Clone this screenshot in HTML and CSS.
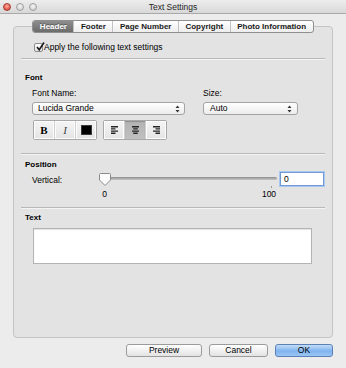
FILE: index.html
```html
<!DOCTYPE html>
<html lang="en">
<head>
  <meta charset="UTF-8" />
  <title>Text Settings</title>
  <link rel="stylesheet" href="styles.css">
</head>
<body>
  <div class="window">

    <!-- Title bar -->
    <div class="titlebar">
      <div class="lights">
        <span class="light red"></span>
        <span class="light"></span>
        <span class="light"></span>
      </div>
      <div class="title">Text Settings</div>
      <div></div>
    </div>

    <!-- Settings panel -->
    <div class="panel">
      <div class="tabs">
        <span class="tab active">Header</span>
        <span class="tab">Footer</span>
        <span class="tab">Page Number</span>
        <span class="tab">Copyright</span>
        <span class="tab">Photo Information</span>
      </div>

      <label class="check-row">
        <span class="checkbox">
          <svg width="10" height="10" viewBox="0 0 10 10"><path d="M2 5 L4.2 7.8 L9 0.5" fill="none" stroke="#1c1c1c" stroke-width="1.6"/></svg>
        </span>
        Apply the following text settings
      </label>

      <div class="separator"></div>

      <div class="section-title">Font</div>
      <div class="font-row">
        <div class="font-col">
          <div class="field-label">Font Name:</div>
          <div class="popup font-popup">
            <span>Lucida Grande</span>
            <svg width="5" height="8" viewBox="0 0 5 8"><path d="M0.5 3 L2.5 0.5 L4.5 3 Z M0.5 5 L2.5 7.5 L4.5 5 Z" fill="#333"/></svg>
          </div>
          <div class="tool-row">
            <div class="seg">
              <span class="tool bold">B</span>
              <span class="tool italic">I</span>
              <span class="tool"><span class="swatch"></span></span>
            </div>
            <div class="seg">
              <span class="tool">
                <svg width="7" height="8" viewBox="0 0 7 8"><path d="M0 0h7v1.4H0z M0 2.2h4.5v1.4H0z M0 4.4h7v1.4H0z M0 6.6h4.5v1.4H0z" fill="#262626"/></svg>
              </span>
              <span class="tool pressed">
                <svg width="7" height="8" viewBox="0 0 7 8"><path d="M0 0h7v1.4H0z M1.25 2.2h4.5v1.4h-4.5z M0 4.4h7v1.4H0z M1.25 6.6h4.5v1.4h-4.5z" fill="#262626"/></svg>
              </span>
              <span class="tool">
                <svg width="7" height="8" viewBox="0 0 7 8"><path d="M0 0h7v1.4H0z M2.5 2.2h4.5v1.4H2.5z M0 4.4h7v1.4H0z M2.5 6.6h4.5v1.4H2.5z" fill="#262626"/></svg>
              </span>
            </div>
          </div>
        </div>
        <div class="size-col">
          <div class="field-label">Size:</div>
          <div class="popup size-popup">
            <span>Auto</span>
            <svg width="5" height="8" viewBox="0 0 5 8"><path d="M0.5 3 L2.5 0.5 L4.5 3 Z M0.5 5 L2.5 7.5 L4.5 5 Z" fill="#333"/></svg>
          </div>
        </div>
      </div>

      <div class="separator sep-font"></div>

      <div class="section-title title-position">Position</div>
      <div class="slider-row">
        <span class="field-label slider-label">Vertical:</span>
        <div class="slider">
          <div class="track"></div>
          <svg class="thumb" width="12" height="13" viewBox="0 0 12 13"><path d="M1.5 0.5 H10.5 Q11.5 0.5 11.5 1.5 V7 L6 12.5 L0.5 7 V1.5 Q0.5 0.5 1.5 0.5 Z" fill="#fbfbfb" stroke="#8a8a8a"/></svg>
          <span class="tick"></span>
        </div>
        <div class="textfield">0</div>
      </div>
      <div class="slider-scale">
        <span class="scale-min">0</span>
        <span class="scale-max">100</span>
      </div>

      <div class="separator sep-position"></div>

      <div class="section-title title-text">Text</div>
      <div class="textarea"></div>
    </div>

    <!-- Dialog buttons -->
    <div class="actions">
      <button class="button preview">Preview</button>
      <button class="button cancel">Cancel</button>
      <button class="button default">OK</button>
    </div>
  </div>
</body>
</html>
```

FILE: styles.css
```css
* {
  box-sizing: border-box;
  margin: 0;
  padding: 0;
}

body {
  font-family: "Liberation Sans", Arial, sans-serif;
  font-size: 8.5px;
  color: #000;
  background: #ececec;
}

.window {
  width: 346px;
  height: 368px;
  display: flex;
  flex-direction: column;
  background: #ececec;
  overflow: hidden;
}

/* Title bar */
.titlebar {
  height: 14px;
  display: grid;
  grid-template-columns: 1fr auto 1fr;
  align-items: center;
  background: linear-gradient(#ededed, #d8d8d8);
  border-bottom: 1px solid #a9a9a9;
}

.lights {
  display: flex;
  gap: 5px;
  padding-left: 3px;
}

.light {
  width: 8px;
  height: 8px;
  border-radius: 50%;
  border: 1px solid #a0a0a0;
  background: radial-gradient(circle at 50% 35%, #f6f6f6, #c6c6c6);
}

.light.red {
  border-color: #a63a30;
  background: radial-gradient(circle at 50% 35%, #ffab9c, #d6342b);
}

.title {
  color: #262626;
  line-height: 10px;
}

/* Panel */
.panel {
  margin: 12px 13px 0;
  height: 312px;
  padding: 0 7px;
  border: 1px solid #c4c4c4;
  border-radius: 4px;
  background: #e3e3e3;
  display: flex;
  flex-direction: column;
}

.tabs {
  align-self: center;
  margin-top: -7px;
  height: 13px;
  display: flex;
  border: 1px solid #8f8f8f;
  border-radius: 3px;
  overflow: hidden;
  background: linear-gradient(#ffffff, #ededed);
}

.tab {
  padding: 0 6.5px;
  font-size: 8px;
  font-weight: bold;
  line-height: 11px;
  color: #1a1a1a;
  border-left: 1px solid #c2c2c2;
}

.tab:first-child {
  border-left: 0;
}

.tab.active {
  color: #fff;
  background: linear-gradient(#8d8d8d, #6c6c6c);
  text-shadow: 0 -1px 0 rgba(0, 0, 0, 0.35);
}

.check-row {
  display: flex;
  align-items: center;
  gap: 1px;
  height: 10px;
  margin: 9px 0 0 13px;
}

.checkbox {
  position: relative;
  width: 9px;
  height: 9px;
  border: 1px solid #8c8c8c;
  border-radius: 2px;
  background: linear-gradient(#ffffff, #e4e4e4);
}

.checkbox svg {
  position: absolute;
  left: 0;
  top: -2px;
}

.separator {
  height: 2px;
  margin-top: 6px;
  border-top: 1px solid #b8b8b8;
  border-bottom: 1px solid #f4f4f4;
}

.section-title {
  height: 10px;
  margin: 13px 0 0 4px;
  font-size: 8px;
  font-weight: bold;
  line-height: 10px;
}

.field-label {
  height: 10px;
  line-height: 10px;
}

/* Font section */
.font-row {
  display: flex;
  gap: 18px;
  margin-top: 5px;
  padding-left: 11px;
}

.font-col {
  width: 153px;
}

.size-col {
  width: 95px;
}

.popup {
  height: 13px;
  margin-top: 4px;
  display: flex;
  align-items: center;
  justify-content: space-between;
  padding: 0 4px 0 5px;
  border: 1px solid #a3a3a3;
  border-radius: 3px;
  background: linear-gradient(#ffffff, #ececec);
  line-height: 11px;
}

.size-popup {
  padding-left: 6px;
  padding-right: 5px;
}

.tool-row {
  display: flex;
  gap: 6px;
  margin: 5px 0 0 1px;
}

.seg {
  display: flex;
  height: 20px;
  border: 1px solid #a8a8a8;
  border-radius: 2px;
  background: #d0d0d0;
  gap: 1px;
}

.tool {
  width: 20px;
  display: flex;
  align-items: center;
  justify-content: center;
  background: linear-gradient(#f5f5f5, #e4e4e4);
  box-shadow: inset 0 0 0 1px #fcfcfc;
  font-family: "Liberation Serif", "Times New Roman", serif;
  font-size: 11px;
}

.tool.bold {
  font-weight: bold;
}

.tool.italic {
  font-style: italic;
  color: #444;
}

.tool.pressed {
  background: linear-gradient(#b2b2b2, #c0c0c0);
  box-shadow: inset 0 1px 1px rgba(0, 0, 0, 0.2);
}

.swatch {
  width: 11px;
  height: 10px;
  background: #000;
  border: 1px solid #3a3a3a;
}

.sep-font {
  margin-top: 13px;
}

.title-position {
  margin-top: 5px;
}

/* Slider */
.slider-row {
  display: flex;
  gap: 3px;
  height: 14px;
  margin-top: 2px;
  padding-left: 11px;
}

.slider-label {
  width: 64px;
  padding-top: 3px;
}

.slider {
  position: relative;
  width: 178px;
}

.track {
  height: 3px;
  margin-top: 5px;
  border-radius: 2px;
  background: linear-gradient(#8e8e8e, #c6c6c6);
}

.thumb {
  position: absolute;
  left: 0;
  top: 1px;
}

.tick {
  position: absolute;
  left: 172px;
  top: 14px;
  width: 1px;
  height: 2px;
  background: #9a9a9a;
}

.textfield {
  width: 44px;
  padding-left: 3px;
  border: 1px solid #6f9ad6;
  box-shadow: 0 0 0 1px #a9c7ef;
  background: #fff;
  line-height: 12px;
}

.slider-scale {
  display: flex;
  justify-content: space-between;
  width: 178px;
  height: 10px;
  margin: 3px 0 0 78px;
  line-height: 10px;
}

.scale-min {
  width: 11px;
  text-align: center;
}

.scale-max {
  width: 16px;
  text-align: center;
}

.sep-position {
  margin-top: 8px;
}

.title-text {
  margin-top: 4px;
}

.textarea {
  width: 279px;
  height: 36px;
  margin: 5px 0 0 12px;
  border: 1px solid #b4b4b4;
  background: #fff;
  box-shadow: inset 0 1px 1px rgba(0, 0, 0, 0.12);
}

/* Dialog buttons */
.actions {
  display: flex;
  justify-content: flex-end;
  gap: 7px;
  margin-top: 6px;
  padding-right: 13px;
}

.button {
  height: 13px;
  border: 1px solid #9b9b9b;
  border-radius: 3px;
  background: linear-gradient(#ffffff, #e3e3e3);
  font-family: "Liberation Sans", Arial, sans-serif;
  font-size: 8.5px;
  line-height: 11px;
  color: #000;
}

.preview {
  width: 76px;
}

.cancel {
  width: 59px;
}

.default {
  width: 58px;
  border-color: #5b80b8;
  background: linear-gradient(#c4ddf8, #7fb3ee 55%, #9cc6f3);
}
```
